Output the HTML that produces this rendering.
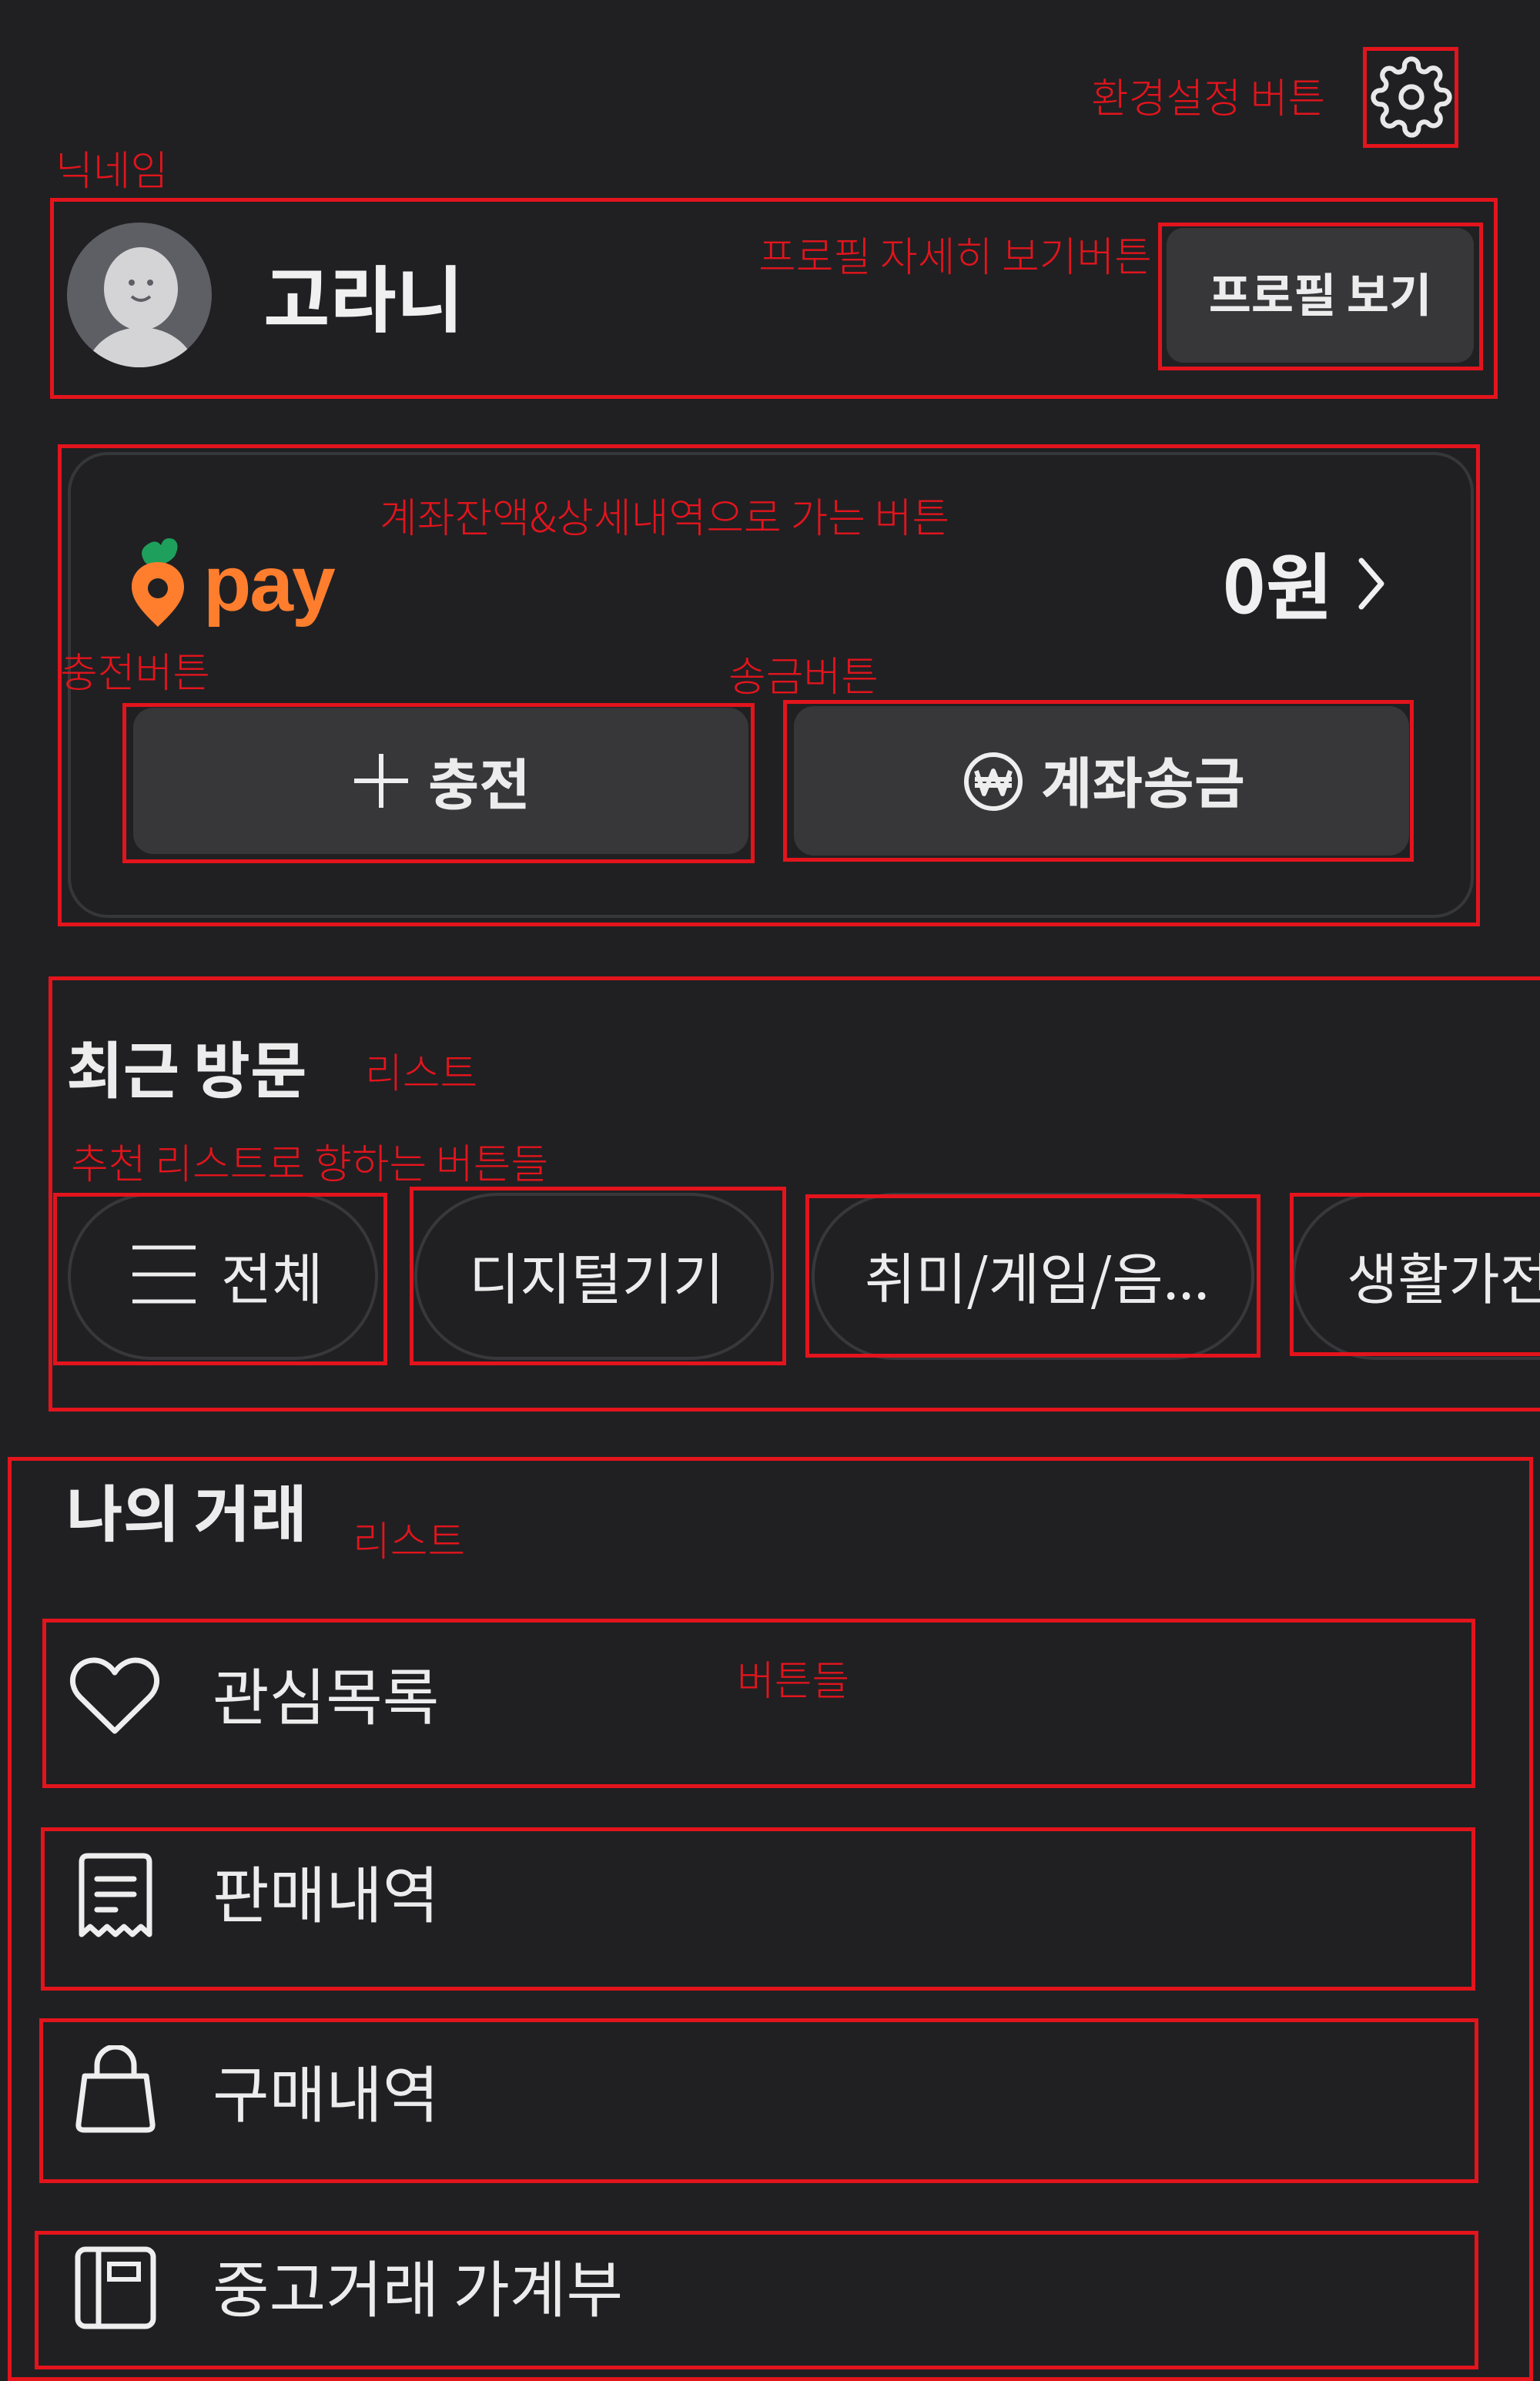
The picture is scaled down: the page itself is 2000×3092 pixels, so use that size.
<!DOCTYPE html>
<html><head><meta charset="utf-8"><style>
*{margin:0;padding:0;box-sizing:border-box}
body{width:2000px;height:3077px;background:#202023;position:relative;overflow:hidden;font-family:"Liberation Sans","Noto Sans CJK KR",sans-serif;color:#ececec}
.a{position:absolute;white-space:nowrap}
.r{position:absolute;border:5px solid #e3141c}
.lb{position:absolute;white-space:nowrap;color:#e3141c;font-size:53px;line-height:60px;font-family:"Noto Sans CJK KR",sans-serif;font-weight:300}
.btn{position:absolute;background:#37373a;border-radius:26px}
.pill{position:absolute;border:4px solid #38383c;border-radius:120px}
.t{position:absolute;white-space:nowrap;font-family:"Noto Sans CJK KR",sans-serif}
</style></head><body>

<!-- gear -->
<div class="r" style="left:1770px;top:61px;width:124px;height:131px"></div>
<svg class="a" style="left:1779px;top:72px" width="108" height="108" viewBox="0 0 24 24" fill="none" stroke="#e8e8e8" stroke-width="1.4" stroke-linejoin="round"><circle cx="12" cy="12" r="3"/><path d="M19.4 15a1.65 1.65 0 0 0 .33 1.82l.06.06a2 2 0 0 1 0 2.830 2 2 0 0 1-2.83 0l-.06-.06a1.65 1.65 0 0 0-1.82-.33 1.65 1.65 0 0 0-1 1.51V21a2 2 0 0 1-2 2 2 2 0 0 1-2-2v-.09A1.65 1.65 0 0 0 9 19.4a1.65 1.65 0 0 0-1.82.33l-.06.06a2 2 0 0 1-2.83 0 2 2 0 0 1 0-2.83l.06-.06a1.65 1.65 0 0 0 .33-1.82 1.65 1.65 0 0 0-1.51-1H3a2 2 0 0 1-2-2 2 2 0 0 1 2-2h.09A1.65 1.65 0 0 0 4.6 9a1.65 1.65 0 0 0-.33-1.82l-.06-.06a2 2 0 0 1 0-2.83 2 2 0 0 1 2.83 0l.06.06a1.65 1.65 0 0 0 1.82.33H9a1.65 1.65 0 0 0 1-1.51V3a2 2 0 0 1 2-2 2 2 0 0 1 2 2v.09a1.65 1.65 0 0 0 1 1.51 1.65 1.65 0 0 0 1.82-.33l.06-.06a2 2 0 0 1 2.83 0 2 2 0 0 1 0 2.83l-.06.06a1.65 1.65 0 0 0-.33 1.82V9a1.65 1.65 0 0 0 1.51 1H21a2 2 0 0 1 2 2 2 2 0 0 1-2 2h-.09a1.65 1.65 0 0 0-1.51 1z"/></svg>
<div class="lb" style="left:1417px;top:94px">환경설정 버튼</div>
<div class="lb" style="left:72px;top:188px">닉네임</div>

<!-- profile -->
<div class="r" style="left:65px;top:257px;width:1880px;height:261px"></div>
<svg class="a" style="left:85px;top:287px" width="192" height="192" viewBox="0 0 192 192"><defs><clipPath id="c"><circle cx="96" cy="96" r="94"/></clipPath></defs><circle cx="96" cy="96" r="94" fill="#5e5f65"/><g clip-path="url(#c)" fill="#d4d4d6"><ellipse cx="98" cy="88" rx="48" ry="54"/><ellipse cx="98" cy="200" rx="72" ry="62"/></g><circle cx="86" cy="80" r="4" fill="#5e5f65"/><circle cx="110" cy="80" r="4" fill="#5e5f65"/><path d="M86 98q12 10 24 0" stroke="#5e5f65" stroke-width="4" fill="none"/></svg>
<div class="t" style="left:342px;top:323px;font-size:94px;line-height:120px;font-weight:700;color:#f0f0f0">고라니</div>
<div class="lb" style="left:985px;top:300px">프로필 자세히 보기버튼</div>
<div class="r" style="left:1504px;top:289px;width:422px;height:192px"></div>
<div class="btn" style="left:1515px;top:296px;width:399px;height:175px;border-radius:22px"></div>
<div class="t" style="left:1515px;top:344px;width:399px;text-align:center;font-size:60px;line-height:72px;font-weight:700">프로필 보기</div>

<!-- pay card -->
<div class="r" style="left:75px;top:577px;width:1847px;height:626px"></div>
<div class="a" style="left:88px;top:587px;width:1826px;height:605px;border:4px solid #36373b;border-radius:52px"></div>
<div class="lb" style="left:493px;top:639px">계좌잔액&amp;상세내역으로 가는 버튼</div>
<svg class="a" style="left:165px;top:688px" width="85" height="130" viewBox="0 0 85 130"><path d="M22 40q-8-14 6-22 10-6 16 2 4-12 16-8 10 6 2 22-8 10-22 12-14 2-18-6z" fill="#1ea05c"/><path d="M40 42c-20 0-34 14-34 32 0 20 18 36 34 52 16-16 34-32 34-52 0-18-14-32-34-32z" fill="#ff7e2e"/><circle cx="40" cy="76" r="13" fill="#202023"/></svg>
<div class="a" style="left:264px;top:698px;font-size:102px;line-height:120px;font-weight:700;color:#ff7e2e;letter-spacing:-2px">pay</div>
<div class="t" style="left:1588px;top:698px;font-size:94px;line-height:116px;font-weight:700;color:#f0f0f0">0원</div>
<svg class="a" style="left:1758px;top:722px" width="48" height="72" viewBox="0 0 48 72"><path d="M10 6l26 30-26 30" stroke="#f0f0f0" stroke-width="7" fill="none" stroke-linecap="round" stroke-linejoin="round"/></svg>

<div class="lb" style="left:78px;top:840px">충전버튼</div>
<div class="lb" style="left:946px;top:845px">송금버튼</div>
<div class="r" style="left:159px;top:913px;width:821px;height:208px"></div>
<div class="btn" style="left:173px;top:919px;width:799px;height:190px"></div>
<svg class="a" style="left:458px;top:977px" width="74" height="74" viewBox="0 0 74 74"><path d="M37 2v70M2 37h70" stroke="#eee" stroke-width="6"/></svg>
<div class="t" style="left:556px;top:970px;font-size:72px;line-height:88px;font-weight:700">충전</div>
<div class="r" style="left:1017px;top:909px;width:819px;height:210px"></div>
<div class="btn" style="left:1031px;top:917px;width:799px;height:194px"></div>
<svg class="a" style="left:1250px;top:975px" width="80" height="80" viewBox="0 0 80 80"><circle cx="40" cy="40" r="35" stroke="#eee" stroke-width="6" fill="none"/><path d="M18 26l10 30 12-30 12 30 10-30M16 37h48M16 45h48" stroke="#eee" stroke-width="6" fill="none" stroke-linejoin="round"/></svg>
<div class="t" style="left:1352px;top:968px;font-size:72px;line-height:88px;font-weight:700">계좌송금</div>

<!-- recent -->
<div class="r" style="left:63px;top:1268px;width:1960px;height:565px"></div>
<div class="t" style="left:86px;top:1337px;font-size:80px;line-height:96px;font-weight:700">최근 방문</div>
<div class="lb" style="left:474px;top:1360px">리스트</div>
<div class="lb" style="left:92px;top:1478px">추천 리스트로 향하는 버튼들</div>
<div class="pill" style="left:88px;top:1549px;width:403px;height:217px"></div>
<div class="pill" style="left:538px;top:1549px;width:467px;height:217px"></div>
<div class="pill" style="left:1054px;top:1549px;width:575px;height:217px"></div>
<div class="pill" style="left:1678px;top:1549px;width:500px;height:217px"></div>
<svg class="a" style="left:170px;top:1614px" width="86" height="82" viewBox="0 0 86 82"><path d="M2 6h82M2 41h82M2 76h82" stroke="#eee" stroke-width="5"/></svg>
<div class="t" style="left:287px;top:1611px;font-size:72px;line-height:90px">전체</div>
<div class="t" style="left:609px;top:1611px;font-size:72px;line-height:90px">디지털기기</div>
<div class="t" style="left:1123px;top:1611px;font-size:72px;line-height:90px">취미/게임/음...</div>
<div class="t" style="left:1749px;top:1611px;font-size:72px;line-height:90px">생활가전</div>
<div class="r" style="left:69px;top:1549px;width:434px;height:224px"></div>
<div class="r" style="left:532px;top:1541px;width:489px;height:232px"></div>
<div class="r" style="left:1046px;top:1551px;width:591px;height:212px"></div>
<div class="r" style="left:1675px;top:1549px;width:340px;height:212px"></div>

<!-- my deals -->
<div class="r" style="left:10px;top:1892px;width:1981px;height:1200px"></div>
<div class="t" style="left:86px;top:1913px;font-size:80px;line-height:96px;font-weight:700">나의 거래</div>
<div class="lb" style="left:458px;top:1968px">리스트</div>

<div class="r" style="left:55px;top:2102px;width:1861px;height:220px"></div>
<svg class="a" style="left:90px;top:2150px" width="118" height="104" viewBox="0 0 118 104"><path d="M59 98L14 54C-6 34 8 6 32 6c12 0 22 8 27 16 5-8 15-16 27-16 24 0 38 28 18 48z" stroke="#eee" stroke-width="7" fill="none" stroke-linejoin="round"/></svg>
<div class="t" style="left:276px;top:2151px;font-size:80px;line-height:96px">관심목록</div>
<div class="lb" style="left:957px;top:2149px">버튼들</div>

<div class="r" style="left:53px;top:2373px;width:1863px;height:212px"></div>
<svg class="a" style="left:96px;top:2404px" width="108" height="116" viewBox="0 0 108 116"><path d="M10 108V14q0-8 8-8h72q8 0 8 8v94l-11-10-11 10-11-10-11 10-11-10-11 10-11-10z" stroke="#eee" stroke-width="7" fill="none" stroke-linejoin="round"/><path d="M30 36h48M30 56h48M30 76h24" stroke="#eee" stroke-width="7" stroke-linecap="round"/></svg>
<div class="t" style="left:276px;top:2408px;font-size:80px;line-height:96px">판매내역</div>

<div class="r" style="left:51px;top:2621px;width:1869px;height:214px"></div>
<svg class="a" style="left:96px;top:2656px" width="108" height="114" viewBox="0 0 108 114"><path d="M30 40V26a24 24 0 0 1 48 0v14" stroke="#eee" stroke-width="7" fill="none"/><path d="M14 40h80l8 62q1 8-7 8H13q-8 0-7-8z" stroke="#eee" stroke-width="7" fill="none" stroke-linejoin="round"/></svg>
<div class="t" style="left:276px;top:2667px;font-size:80px;line-height:96px">구매내역</div>

<div class="r" style="left:45px;top:2897px;width:1875px;height:180px"></div>
<svg class="a" style="left:96px;top:2916px" width="110" height="112" viewBox="0 0 110 112"><rect x="5" y="5" width="98" height="100" rx="10" stroke="#eee" stroke-width="7" fill="none"/><path d="M32 5v100" stroke="#eee" stroke-width="7"/><rect x="46" y="24" width="38" height="20" stroke="#eee" stroke-width="6" fill="none"/></svg>
<div class="t" style="left:276px;top:2920px;font-size:80px;line-height:96px">중고거래 가계부</div>

</body></html>
